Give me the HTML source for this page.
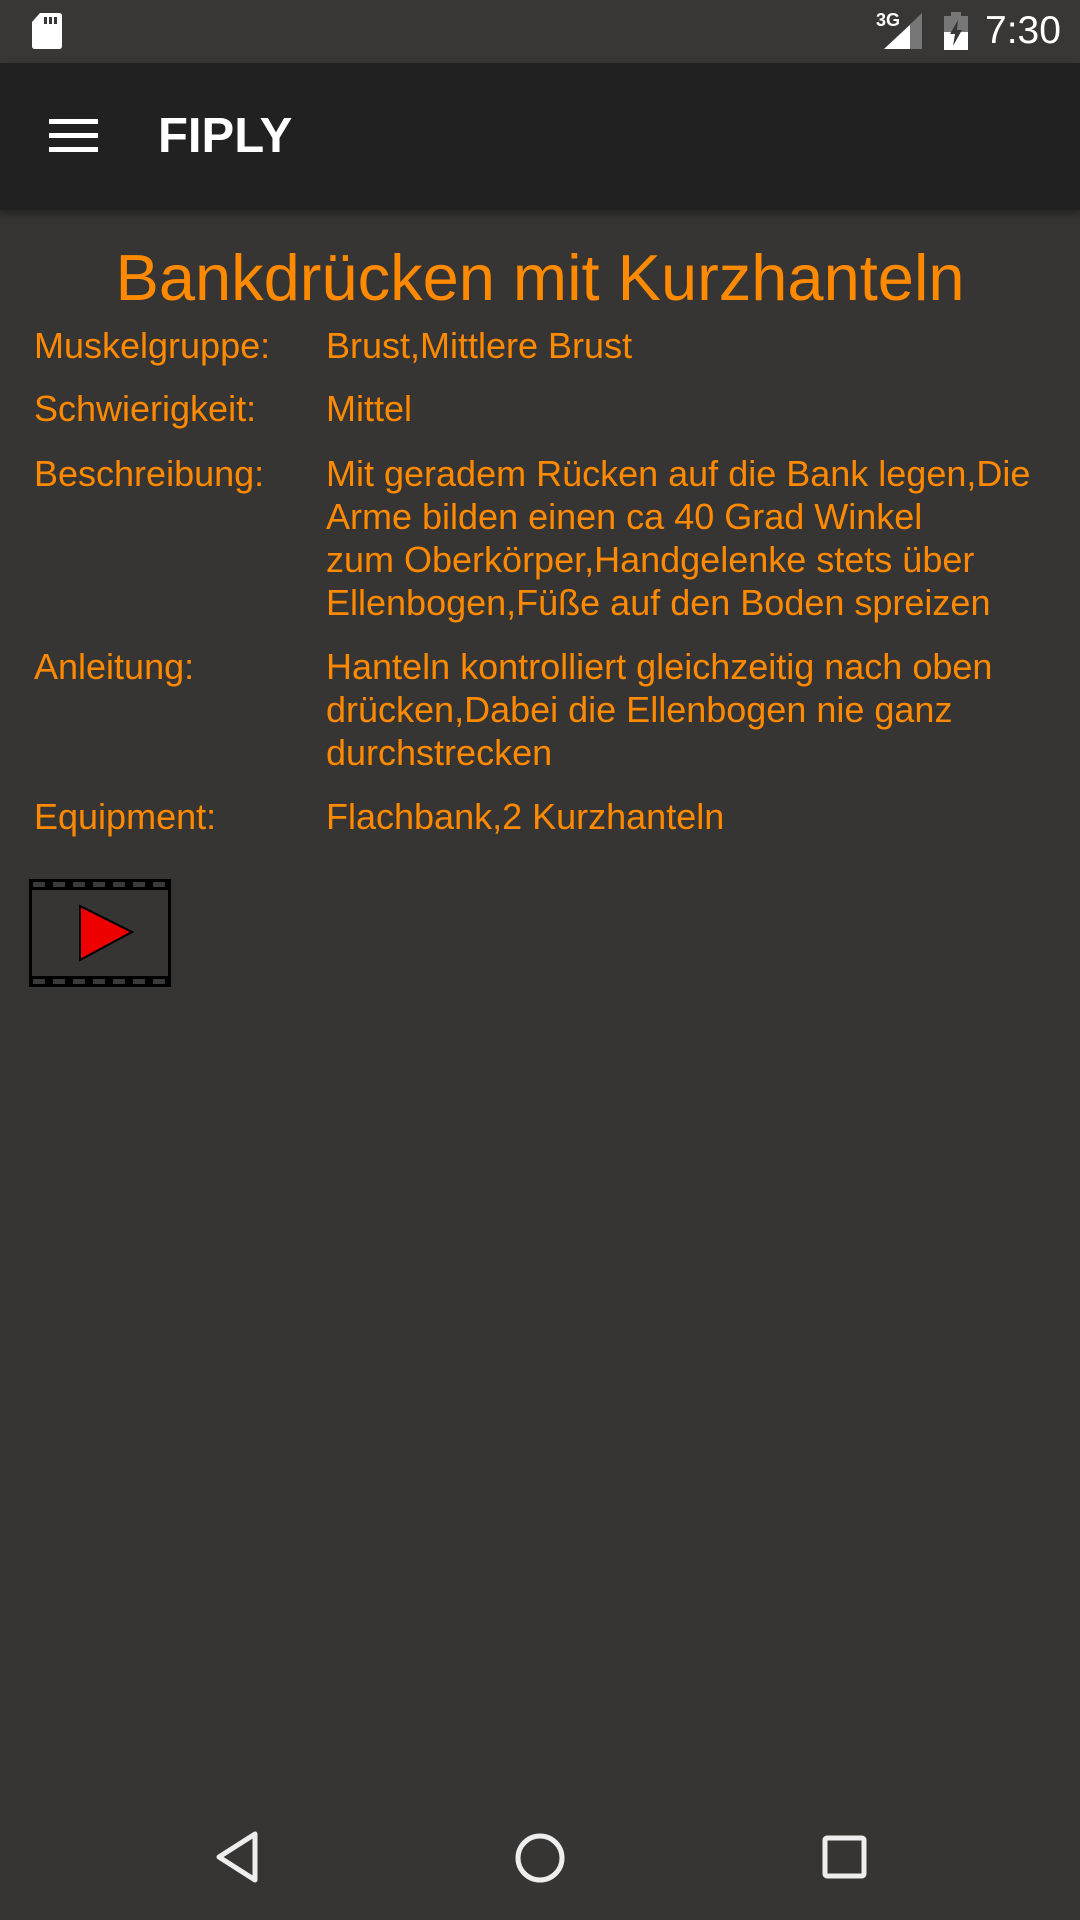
<!DOCTYPE html>
<html><head><meta charset="utf-8"><style>
*{margin:0;padding:0;box-sizing:border-box}
body{width:1080px;height:1920px;background:#363534;position:relative;overflow:hidden;font-family:"Liberation Sans",sans-serif}
.sb{position:absolute;left:0;top:0;width:1080px;height:63px;background:#383735}
.tb{position:absolute;left:0;top:63px;width:1080px;height:147px;background:#212121;box-shadow:0 4px 8px rgba(0,0,0,.35)}
.t{position:absolute;white-space:nowrap;color:#ff8a00;font-size:36px;line-height:43px}
</style></head><body>
<div class="sb">
<svg style="position:absolute;left:32px;top:13px" width="30" height="36" viewBox="0 0 30 36"><path d="M8 0H27Q30 0 30 3V33Q30 36 27 36H3Q0 36 0 33V9Z" fill="#fff"/><rect x="12" y="4" width="3" height="7" fill="#383735"/><rect x="17" y="4" width="3" height="7" fill="#383735"/><rect x="22" y="4" width="3" height="7" fill="#383735"/></svg>
<div style="position:absolute;left:876px;top:10px;color:#fff;font-size:18px;font-weight:bold">3G</div>
<svg style="position:absolute;left:884px;top:13px" width="38" height="36" viewBox="0 0 38 36"><path d="M38 0V36H0Z" fill="#777"/><path d="M26 12V36H0Z" fill="#fff"/></svg>
<svg style="position:absolute;left:944px;top:12px" width="24" height="38" viewBox="0 0 24 38"><rect x="7" y="0" width="10" height="4" fill="#777"/><rect x="0" y="4" width="24" height="34" fill="#777"/><rect x="0" y="20" width="24" height="18" fill="#fff"/><path d="M14 8L6 22H11L9 34L18 18H13Z" fill="#383735"/></svg>
<div style="position:absolute;left:985px;top:9px;color:#fff;font-size:39px">7:30</div>
</div>
<div class="tb">
<div style="position:absolute;left:49px;top:56px;width:49px;height:5px;background:#fff"></div>
<div style="position:absolute;left:49px;top:70px;width:49px;height:5px;background:#fff"></div>
<div style="position:absolute;left:49px;top:84px;width:49px;height:5px;background:#fff"></div>
<div style="position:absolute;left:158px;top:45px;color:#fff;font-size:49px;font-weight:bold;line-height:56px">FIPLY</div>
</div>
<div style="position:absolute;left:0;width:1080px;top:240px;text-align:center;color:#ff8a00;font-size:65px;line-height:76px">Bankdrücken mit Kurzhanteln</div>
<div class="t" style="left:34px;top:324px">Muskelgruppe:</div>
<div class="t" style="left:326px;top:324px">Brust,Mittlere Brust</div>
<div class="t" style="left:34px;top:387px">Schwierigkeit:</div>
<div class="t" style="left:326px;top:387px">Mittel</div>
<div class="t" style="left:34px;top:452px">Beschreibung:</div>
<div class="t" style="left:326px;top:452px">Mit geradem Rücken auf die Bank legen,Die<br>Arme bilden einen ca 40 Grad Winkel<br>zum Oberkörper,Handgelenke stets über<br>Ellenbogen,Füße auf den Boden spreizen</div>
<div class="t" style="left:34px;top:645px">Anleitung:</div>
<div class="t" style="left:326px;top:645px">Hanteln kontrolliert gleichzeitig nach oben<br>drücken,Dabei die Ellenbogen nie ganz<br>durchstrecken</div>
<div class="t" style="left:34px;top:795px">Equipment:</div>
<div class="t" style="left:326px;top:795px">Flachbank,2 Kurzhanteln</div>
<svg style="position:absolute;left:29px;top:879px" width="142" height="108" viewBox="0 0 142 108">
<rect x="0" y="0" width="142" height="108" fill="#000"/>
<rect x="3" y="11" width="136" height="86" fill="#363534"/>
<g fill="#3a3a3a">
<rect x="4" y="3" width="12" height="5"/><rect x="24" y="3" width="12" height="5"/><rect x="44" y="3" width="12" height="5"/><rect x="64" y="3" width="12" height="5"/><rect x="84" y="3" width="12" height="5"/><rect x="104" y="3" width="12" height="5"/><rect x="124" y="3" width="12" height="5"/>
<rect x="4" y="100" width="12" height="5"/><rect x="24" y="100" width="12" height="5"/><rect x="44" y="100" width="12" height="5"/><rect x="64" y="100" width="12" height="5"/><rect x="84" y="100" width="12" height="5"/><rect x="104" y="100" width="12" height="5"/><rect x="124" y="100" width="12" height="5"/>
</g>
<path d="M51 27L103 53L51 81Z" fill="#ee0000" stroke="#000" stroke-width="2"/>
</svg>
<svg style="position:absolute;left:210px;top:1828px" width="56" height="58" viewBox="0 0 56 58"><path d="M45 6V52L9 29Z" fill="none" stroke="#eee" stroke-width="5" stroke-linejoin="round"/></svg>
<svg style="position:absolute;left:512px;top:1831px" width="56" height="54" viewBox="0 0 56 54"><ellipse cx="28" cy="27" rx="22" ry="22" fill="none" stroke="#eee" stroke-width="5"/></svg>
<svg style="position:absolute;left:820px;top:1833px" width="50" height="48" viewBox="0 0 50 48"><rect x="5" y="5" width="39" height="38" rx="2" fill="none" stroke="#eee" stroke-width="5"/></svg>
</body></html>
